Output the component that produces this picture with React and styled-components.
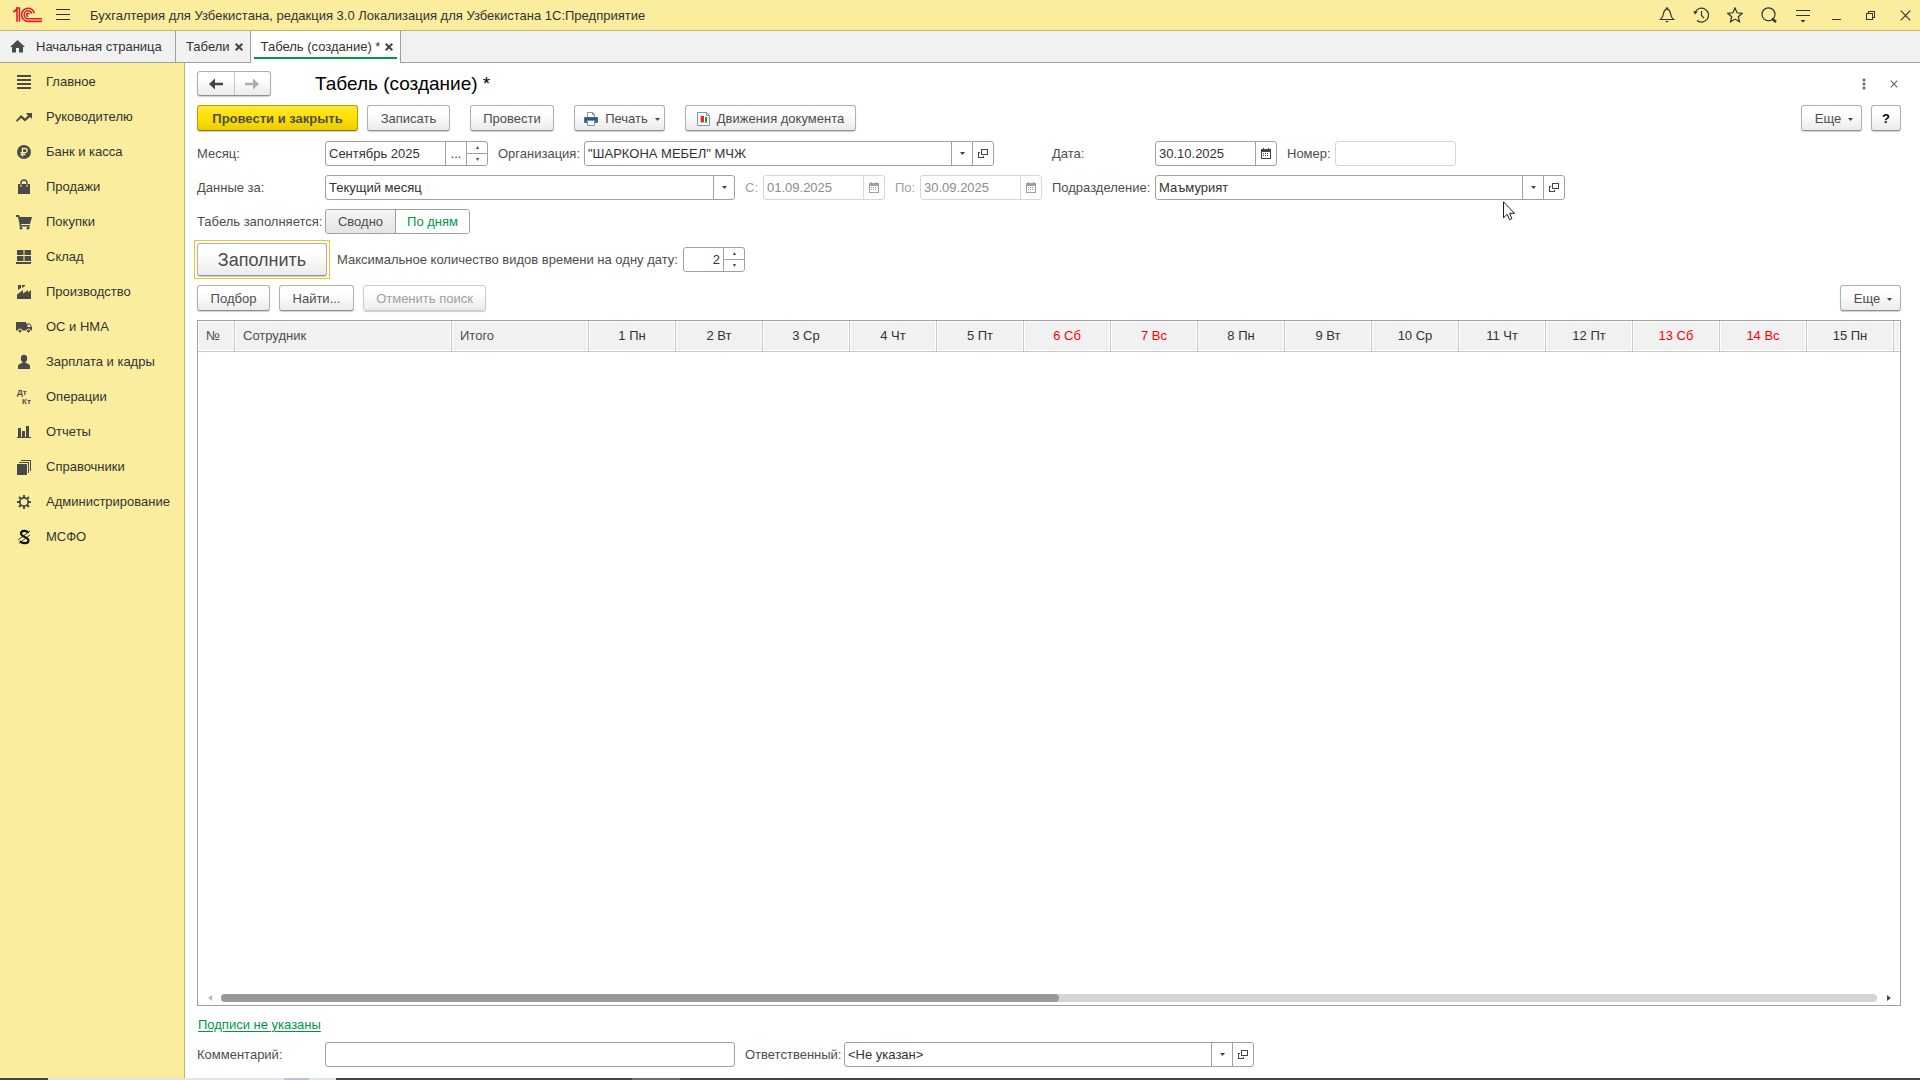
import React from "react";
import styled, { createGlobalStyle, css } from "styled-components";

const c = {
  yellow: "#fbed9e",
  yellowLine: "#c3b566",
  line: "#a0a0a0",
  lineSoft: "#d6d6d6",
  text: "#333333",
  label: "#4d4d4d",
  muted: "#a0a0a0",
  green: "#009646",
  head: "#f1f1f1",
};

const GlobalStyle = createGlobalStyle`
  * { box-sizing: border-box; }
  body { margin: 0; background: #ffffff; }
  body, button, input, select {
    font-family: "Liberation Sans", Arial, sans-serif;
    font-size: 13px;
    line-height: 16px;
    color: ${c.text};
  }
  button, input, select { margin: 0; padding: 0; border: 0; background: none; }
  svg { display: block; flex: none; }
`;

/* ---------- shell ---------- */
const Page = styled.div`
  display: flex;
  flex-direction: column;
  min-height: 100vh;
`;

const TitleBar = styled.header`
  display: flex;
  align-items: center;
  height: 31px;
  padding: 0 5px 0 13px;
  background: ${c.yellow};
  border-bottom: 1px solid ${c.yellowLine};
`;

const MenuButton = styled.button`
  display: flex;
  margin: 0 20px 0 13px;
`;

const AppTitle = styled.span`
  flex: 1;
  padding-top: 2px;
`;

const WindowTools = styled.div`
  display: flex;
  gap: 14px;
`;

const ToolButton = styled.button`
  display: flex;
  align-items: center;
  justify-content: center;
  width: ${(p) => p.$w || 20}px;
  height: 20px;
`;

const TabBar = styled.nav`
  display: flex;
  height: 32px;
  background: ${c.head};
  border-bottom: 1px solid ${c.line};
`;

const Tab = styled.div`
  display: flex;
  align-items: center;
  gap: 5px;
  padding: 0 7px 0 10px;
  border-right: 1px solid ${c.line};
  ${(p) =>
    p.$active &&
    css`
      margin-bottom: -1px;
      padding-bottom: 1px;
      background: linear-gradient(${c.green}, ${c.green}) center bottom 4px / calc(100% - 6px) 2px no-repeat #ffffff;
    `}
`;

const HomeTab = styled(Tab)`
  gap: 11px;
  width: 176px;
`;

const TabButton = styled.button`
  color: ${c.text};
`;

const Body = styled.div`
  display: flex;
  flex: 1;
`;

const Sidebar = styled.aside`
  flex: none;
  width: 185px;
  padding-top: 1px;
  background: ${c.yellow};
  border-right: 1px solid ${c.yellowLine};
`;

const MenuItem = styled.a`
  display: flex;
  align-items: center;
  gap: 14px;
  height: 35px;
  padding-left: 16px;
  color: ${c.text};
  text-decoration: none;
`;

const Main = styled.main`
  display: flex;
  flex: 1;
  flex-direction: column;
  gap: 9px;
  min-width: 0;
  padding: 8px 19px 11px 12px;
`;

/* ---------- buttons ---------- */
const Heading = styled.div`
  display: flex;
  align-items: center;
  height: 25px;
`;

const PageTitle = styled.h1`
  flex: 1;
  margin: 0 0 0 44px;
  font-size: 19px;
  font-weight: 400;
  line-height: 24px;
  color: #000000;
`;

const HeadingTools = styled.div`
  display: flex;
  gap: 15px;
`;

const raised = css`
  border: 1px solid #b0b0b0;
  border-bottom-color: #909090;
  border-radius: 3px;
  background: linear-gradient(#ffffff 30%, #ebebeb);
  box-shadow: 0 1px 1px rgba(0, 0, 0, 0.2);
`;

const History = styled.div`
  ${raised}
  display: flex;
  width: 74px;
  height: 25px;
`;

const HistoryButton = styled.button`
  display: flex;
  flex: 1;
  align-items: center;
  justify-content: center;
  & + & { border-left: 1px solid #c8c8c8; }
`;

const Bar = styled.div`
  display: flex;
  align-items: center;
  gap: 9px;
  padding-bottom: ${(p) => p.$space || 0}px;
`;

const Group = styled.div`
  display: flex;
  gap: 9px;
  margin-right: ${(p) => (p.$last ? 0 : 11)}px;
`;

const Spacer = styled.div`
  flex: 1;
`;

const Button = styled.button`
  ${raised}
  display: flex;
  align-items: center;
  justify-content: center;
  gap: 7px;
  width: ${(p) => p.$w}px;
  height: 26px;
  padding: 2px 0 0 ${(p) => (p.$menu ? 5 : 0)}px;
  color: ${c.label};
  &:disabled {
    color: ${c.muted};
    border-color: #cccccc;
  }
`;

const PrimaryButton = styled(Button)`
  font-weight: 700;
  border-color: #b89d00;
  border-bottom-color: #8f7a00;
  background: linear-gradient(#ffe838, #ffe000 50%, #eccd00);
`;

const HelpButton = styled(Button)`
  font-weight: 700;
  color: #000000;
`;

const FillButton = styled(Button)`
  position: relative;
  width: 130px;
  height: 33px;
  padding: 0;
  font-size: 18px;
  &::after {
    content: "";
    position: absolute;
    inset: -4px;
    border: 1px solid #f5c518;
  }
`;

/* ---------- form ---------- */
const Form = styled.div`
  display: flex;
  gap: 10px;
`;

const FormColumn = styled.div`
  display: flex;
  flex-direction: column;
  gap: 9px;
`;

const FormRow = styled.div`
  display: flex;
  align-items: center;
  gap: 10px;
`;

const FieldGroup = styled.div`
  display: flex;
  align-items: center;
`;

const Label = styled.label`
  width: ${(p) => p.$w}px;
  white-space: nowrap;
  color: ${(p) => (p.$muted ? c.muted : c.label)};
`;

const Box = styled.div`
  --edge: ${(p) => (p.$muted ? c.lineSoft : c.line)};
  display: flex;
  width: ${(p) => p.$w}px;
  height: 25px;
  border: 1px solid var(--edge);
  border-radius: 3px;
  background: #ffffff;
`;

const TextInput = styled.input`
  flex: 1;
  min-width: 0;
  padding: 0 3px;
  outline: 0;
  appearance: textfield;
  text-align: ${(p) => (p.$right ? "right" : "left")};
  &::-webkit-inner-spin-button { display: none; }
  &:disabled { color: #8c8c8c; }
`;

const SelectWrap = styled.span`
  display: grid;
  flex: 1;
  grid-template-columns: minmax(0, 1fr) 21px;
`;

const Select = styled.select`
  grid-area: 1 / 1 / 2 / 3;
  padding: 0 26px 0 3px;
  outline: 0;
  appearance: none;
`;

const Arrow = styled.span`
  display: flex;
  grid-area: 1 / 2;
  align-items: center;
  justify-content: center;
  border-left: 1px solid var(--edge);
  pointer-events: none;
`;

const SideButton = styled.button`
  display: flex;
  align-items: center;
  justify-content: center;
  width: 21px;
  border-left: 1px solid var(--edge);
`;

const Stepper = styled.span`
  display: grid;
  width: 21px;
  border-left: 1px solid var(--edge);
`;

const StepButton = styled.button`
  display: flex;
  align-items: center;
  justify-content: center;
  & + & { border-top: 1px solid var(--edge); }
`;

const Segments = styled.div`
  display: flex;
  height: 25px;
  border: 1px solid ${c.line};
  border-radius: 3px;
  overflow: hidden;
`;

const Segment = styled.label`
  display: flex;
  align-items: center;
  justify-content: center;
  width: ${(p) => p.$w}px;
  color: ${c.label};
  background: linear-gradient(#f6f6f6, #e4e4e4);
  & + & { border-left: 1px solid ${c.line}; }
  &:has(input:checked) {
    color: ${c.green};
    background: #ffffff;
  }
  input {
    position: absolute;
    opacity: 0;
    pointer-events: none;
  }
`;

/* ---------- table ---------- */
const Sheet = styled.section`
  display: flex;
  flex: 1;
  flex-direction: column;
  justify-content: space-between;
  border: 1px solid ${c.line};
  overflow: hidden;
`;

const SheetView = styled.div`
  overflow: hidden;
`;

const Table = styled.table`
  width: 100%;
  table-layout: fixed;
  border-collapse: separate;
  border-spacing: 0;
`;

const Th = styled.th`
  height: 31px;
  padding: 0 8px 1px;
  font-weight: 400;
  text-align: ${(p) => (p.$day ? "center" : "left")};
  white-space: nowrap;
  color: ${(p) => (p.$off ? "#ff0000" : p.$day ? c.text : c.label)};
  background: ${c.head};
  border-right: 1px solid #c8c8c8;
  border-bottom: 1px solid #c8c8c8;
  box-shadow: inset 0 0 0 1px #ffffff;
  &:last-child { border-right: 0; padding: 0; }
`;

const ScrollRow = styled.div`
  display: flex;
  align-items: center;
  gap: 8px;
  padding: 0 8px 3px;
`;

const ScrollArrow = styled.button`
  display: flex;
  width: 7px;
  height: 8px;
  align-items: center;
  justify-content: center;
`;

const Track = styled.div`
  display: flex;
  flex: 1;
  height: 8px;
  border-radius: 4px;
  background: #d5d5d5;
`;

const Thumb = styled.div`
  border-radius: 4px;
  background: #999999;
`;

const SignLink = styled.a`
  align-self: flex-start;
  padding: 2px 0 0 1px;
  color: ${c.green};
  text-decoration: underline;
  text-underline-offset: 2px;
`;

const DesktopEdge = styled.footer`
  display: flex;
  height: 2px;
  background: #454343;
`;

const EdgePart = styled.span`
  width: ${(p) => p.$w}px;
  background: ${(p) => p.$color};
`;

const Pointer = styled.div`
  position: absolute;
  left: 1503px;
  top: 201px;
  pointer-events: none;
`;

/* ---------- icons ---------- */
const Svg = ({ s = 16, w = s, h = s, children, ...rest }) => (
  <svg width={w} height={h} viewBox={`0 0 ${w} ${h}`} fill="none" aria-hidden="true" {...rest}>
    {children}
  </svg>
);

const Logo = () => (
  <Svg w={30} h={16} stroke="#da2128" strokeWidth="1.6">
    <path d="M0 4.4h1.8L4 1.2v13.6" />
    <path d="M3.2 1h3.2v13.8" />
    <path d="M21.2 6.2C20.4 3 18.2 1.2 15.2 1.2a6.6 6.6 0 0 0 0 13.2H29" />
    <path d="M18.6 6.6c-.4-1.8-1.6-2.8-3.4-2.8a4 4 0 0 0 0 8H29" />
    <path d="M16.2 7.2c-.2-.6-.4-.8-1-.8a1.5 1.5 0 0 0 0 3" />
  </Svg>
);

const Burger = () => (
  <Svg w={14} h={12} fill="#333" shapeRendering="crispEdges">
    <path d="M0 0h14v1H0zM0 5h14v1H0zM0 10h14v1H0z" />
  </Svg>
);

const Caret = ({ up, w = 5 }) => (
  <Svg w={w} h={3} fill="#444">
    <path d={up ? `M0 3h${w}L${w / 2} 0z` : `M0 0h${w}L${w / 2} 3z`} />
  </Svg>
);

const OpenIcon = () => (
  <Svg s={10} stroke="#444" shapeRendering="crispEdges">
    <path d="M3.5 .5h6v5h-6z M2 3.5H.5v5h5V7" />
  </Svg>
);

const CalendarIcon = ({ color = "#444" }) => (
  <Svg w={10} h={11} fill={color} shapeRendering="crispEdges">
    <path d="M0 1h2V0h1v1h4V0h1v1h2v10H0zM1 4v6h8V4z" fillRule="evenodd" />
    <path d="M2 5h1v1H2zM4 5h1v1H4zM6 5h1v1H6zM2 7h1v1H2zM4 7h1v1H4zM6 7h1v1H6z" />
  </Svg>
);

const CrossIcon = ({ s = 8, color = "#444", width = 2 }) => (
  <Svg s={s} stroke={color} strokeWidth={width}>
    <path d={`M.7 .7L${s - 0.7} ${s - 0.7}M${s - 0.7} .7L.7 ${s - 0.7}`} />
  </Svg>
);

const HomeIcon = () => (
  <Svg w={15} h={13} fill="#4a4a4a">
    <path d="M7.5 0L15 7h-2v5.500H9V8H6v4.500H2V7H0z" />
  </Svg>
);

const ArrowIcon = ({ flip, color }) => (
  <Svg w={14} h={12} fill={color}>
    <path d={flip ? "M14 6L8 .5V4.800H0v2.400h8v4.300z" : "M0 6L6 .5V4.800h8v2.400H6v4.300z"} />
  </Svg>
);

const PrinterIcon = () => (
  <Svg w={14} h={14}>
    <path d="M3.500 5V.5h5l2 2V5" fill="#fff" stroke="#7d93a8" />
    <path d="M8.500 .5v2h2" stroke="#7d93a8" />
    <rect x="0" y="5" width="14" height="6" rx="1" fill="#3f6a96" />
    <path d="M1 7h12" stroke="#24476b" />
    <path d="M3.500 8.500h7v5h-7z" fill="#fff" stroke="#7d93a8" />
  </Svg>
);

const ReportIcon = () => (
  <Svg w={13} h={14}>
    <path d="M.5 .5h9l3 3v10H.5z" fill="#fff" stroke="#8096aa" />
    <path d="M9.500 .5v3h3" stroke="#8096aa" />
    <path d="M3.500 3v7.500H11" stroke="#b4c0cb" />
    <path d="M4 4h3v6H4z" fill="#f3251c" />
    <path d="M8 5h2v5H8z" fill="#159a2c" />
  </Svg>
);

const windowIcons = [
  ["Уведомления", <Svg key="i" stroke="#333" strokeWidth="1.200"><path d="M1.500 12.500h13c-2-1.500-2.500-3-3-6C11 3.800 10.200 2.600 8.700 2.300V1H7.300v1.300C5.800 2.600 5 3.800 4.500 6.500c-.5 3-1 4.500-3 6z" /><path d="M6 14h4l-2 1.600z" fill="#333" stroke="none" /></Svg>],
  ["История", <Svg key="i" stroke="#333" strokeWidth="1.200"><path d="M2 5.500A7 7 0 1 1 4 13.500" /><path d="M8.500 4v4.500l2.500 2.700" /><path d="M0 4.500h4.800L2.200 7.500z" fill="#333" stroke="none" /></Svg>],
  ["Избранное", <Svg key="i" stroke="#333" strokeWidth="1.200"><path d="M8 1l2.100 4.800 5.200.5-4 3.400 1.200 5.100L8 12.100l-4.500 2.700 1.200-5.100-4-3.400 5.200-.5z" /></Svg>],
  ["Поиск", <Svg key="i" stroke="#333" strokeWidth="1.200"><circle cx="7.500" cy="7.300" r="6.500" /><path d="M11 11.500l4 3.500" strokeWidth="2.400" /></Svg>],
  ["Настройки", <Svg key="i" fill="#333"><path d="M1 3h14v1H1zM1 8h14v1H1zM5.500 13h5L8 15.500z" /></Svg>],
  ["Свернуть", <Svg key="i" fill="#333" shapeRendering="crispEdges"><path d="M3 12h9v1H3z" /></Svg>],
  ["Восстановить", <Svg key="i" stroke="#333" shapeRendering="crispEdges"><path d="M3.500 6.500h6v6h-6zM5.500 6V4.500h6v6H10" /></Svg>],
  ["Закрыть", <CrossIcon key="i" s={11} color="#333" width={1.2} />],
];

const I = (children) => <Svg fill="#4a4a4a">{children}</Svg>;

const menu = [
  ["Главное", I(<path d="M1 1h14v2H1zM1 5h14v2H1zM1 9h14v2H1zM1 13h14v2H1z" />)],
  ["Руководителю", I(<path d="M0 11.500l5-5.500 4 3.500 3-3L10 4h6v6l-2-2-5 4.500-4-3.500L1 13z" />)],
  ["Банк и касса", I(<><circle cx="8" cy="8" r="7" /><path d="M6.500 12.500V4.500h2.500a2.100 2.100 0 0 1 0 4.200H4.500M4.500 10.500h5" stroke={c.yellow} strokeWidth="1.300" fill="none" /></>)],
  ["Продажи", I(<><path d="M2 5h12v10H2z" /><path d="M5 8V4a3 3 0 0 1 6 0v4" stroke="#4a4a4a" strokeWidth="1.400" fill="none" /><path d="M5 8V5.500M11 8V5.500" stroke={c.yellow} /></>)],
  ["Покупки", I(<><path d="M0 1h3l1 2h12l-2 7H5v1h9v1.500H3.500V10L2 3H0z" /><circle cx="5" cy="14" r="1.500" /><circle cx="12" cy="14" r="1.500" /></>)],
  ["Склад", I(<path d="M1 1h6.500v5H1zM8.500 1H15v5H8.500zM1 7h6.500v5H1zM8.500 7H15v5H8.500zM0 13h15v2H0z" />)],
  ["Производство", I(<path d="M1 15v-4.500L7 6v3.500L12 6v2.500L15 6v9zM2 1h3v3L2 6zM6 1h3v1L6 4z" />)],
  ["ОС и НМА", I(<><path d="M0 3h10v8.500H0zM10 4.500h4l2 3.500v3.500h-6z" /><path d="M11.500 5.500h2L15 8h-3.500z" fill={c.yellow} /><circle cx="4" cy="12" r="2" stroke={c.yellow} /><circle cx="12.500" cy="12" r="2" stroke={c.yellow} /></>)],
  ["Зарплата и кадры", I(<><ellipse cx="8" cy="4.500" rx="3.200" ry="3.800" /><path d="M6.500 7h3v3h-3z" /><path d="M2 15v-3c0-1.500 2-2.500 4-3h4c2 .5 4 1.500 4 3v3z" /></>)],
  ["Операции", <Svg key="i" fill="#4a4a4a" fontSize="8" fontWeight="700" fontFamily="Liberation Sans, Arial, sans-serif"><text x="1" y="6">Дт</text><text x="6" y="15">Кт</text></Svg>],
  ["Отчеты", I(<path d="M2 4h3v9H2zM6 7h3v6H6zM10 2h3v11h-3zM1 13h14v1H1z" />)],
  ["Справочники", I(<path d="M1 5h10v11H1zM3 3h10v11h-1V4H3zM5 1h10v11h-1V2H5z" />)],
  ["Администрирование", I(<><circle cx="8" cy="8" r="4.200" fill="none" stroke="#4a4a4a" strokeWidth="1.800" /><path d="M8 1v3M8 12v3M1 8h3M12 8h3M3 3l2.200 2.200M10.800 10.800L13 13M13 3l-2.200 2.200M5.200 10.800L3 13" stroke="#4a4a4a" strokeWidth="2" /></>)],
  ["МСФО", <Svg key="i" stroke="#111"><path d="M12 4C11 1 5 1 5 4.500S12.500 8 12.500 11.500 6 15 4 12" strokeWidth="2.200" /><path d="M14 2L2 11M14 6L3 14.500" strokeWidth=".8" /></Svg>],
];

/* ---------- field parts ---------- */
const Combo = ({ id, w, value, open }) => (
  <Box $w={w}>
    <SelectWrap>
      <Select id={id} defaultValue={value}>
        <option>{value}</option>
      </Select>
      <Arrow><Caret /></Arrow>
    </SelectWrap>
    {open && <SideButton type="button" aria-label="Открыть"><OpenIcon /></SideButton>}
  </Box>
);

const DateBox = ({ id, value, disabled }) => (
  <Box $w={122} $muted={disabled}>
    <TextInput id={id} defaultValue={value} disabled={disabled} />
    <SideButton type="button" aria-label="Календарь" disabled={disabled}>
      <CalendarIcon color={disabled ? "#a0a0a0" : "#444"} />
    </SideButton>
  </Box>
);

const Steps = () => (
  <Stepper>
    <StepButton type="button" aria-label="Больше"><Caret up w={3} /></StepButton>
    <StepButton type="button" aria-label="Меньше"><Caret w={3} /></StepButton>
  </Stepper>
);

const ScrollBar = ({ total, visible }) => (
  <ScrollRow>
    <ScrollArrow aria-label="Влево"><Svg w={4} h={6} fill="#b8b8b8"><path d="M4 0v6L0 3z" /></Svg></ScrollArrow>
    <Track><Thumb style={{ width: `${(visible / total) * 100}%` }} /></Track>
    <ScrollArrow aria-label="Вправо"><Svg w={4} h={6} fill="#444"><path d="M0 0v6l4-3z" /></Svg></ScrollArrow>
  </ScrollRow>
);

const weekdays = ["Пн", "Вт", "Ср", "Чт", "Пт", "Сб", "Вс"];
const days = Array.from({ length: 15 }, (_, i) => ({
  title: `${i + 1} ${weekdays[i % 7]}`,
  off: i % 7 > 4,
}));

export default function App() {
  return (
    <>
      <GlobalStyle />
      <Page>
        <TitleBar>
          <Logo />
          <MenuButton aria-label="Меню"><Burger /></MenuButton>
          <AppTitle>Бухгалтерия для Узбекистана, редакция 3.0 Локализация для Узбекистана 1С:Предприятие</AppTitle>
          <WindowTools>
            {windowIcons.map(([name, icon]) => (
              <ToolButton key={name} aria-label={name}>{icon}</ToolButton>
            ))}
          </WindowTools>
        </TitleBar>

        <TabBar>
          <HomeTab><HomeIcon /><TabButton>Начальная страница</TabButton></HomeTab>
          <Tab>
            <TabButton>Табели</TabButton>
            <TabButton aria-label="Закрыть вкладку"><CrossIcon /></TabButton>
          </Tab>
          <Tab $active>
            <TabButton>Табель (создание) *</TabButton>
            <TabButton aria-label="Закрыть вкладку"><CrossIcon /></TabButton>
          </Tab>
        </TabBar>

        <Body>
          <Sidebar>
            {menu.map(([name, icon]) => (
              <MenuItem key={name} href="#">{icon}{name}</MenuItem>
            ))}
          </Sidebar>

          <Main>
            <Heading>
              <History>
                <HistoryButton aria-label="Назад"><ArrowIcon color="#444" /></HistoryButton>
                <HistoryButton aria-label="Вперед"><ArrowIcon flip color="#adadad" /></HistoryButton>
              </History>
              <PageTitle>Табель (создание) *</PageTitle>
              <HeadingTools>
                <ToolButton $w={15} aria-label="Действия">
                  <Svg w={4} h={12} fill="#666"><circle cx="2" cy="2" r="1.500" /><circle cx="2" cy="6" r="1.500" /><circle cx="2" cy="10" r="1.500" /></Svg>
                </ToolButton>
                <ToolButton $w={15} aria-label="Закрыть"><CrossIcon color="#666" width={1.2} /></ToolButton>
              </HeadingTools>
            </Heading>

            <Bar $space={1}>
              <Group>
                <PrimaryButton $w={161}>Провести и закрыть</PrimaryButton>
                <Button $w={83}>Записать</Button>
              </Group>
              <Group><Button $w={84}>Провести</Button></Group>
              <Group><Button $w={91} $menu><PrinterIcon />Печать<Caret /></Button></Group>
              <Group $last><Button $w={171}><ReportIcon />Движения документа</Button></Group>
              <Spacer />
              <Button $w={61} $menu>Еще<Caret /></Button>
              <HelpButton $w={30}>?</HelpButton>
            </Bar>

            <Form>
              <FormColumn>
                <FormRow>
                  <FieldGroup>
                    <Label $w={128} htmlFor="month">Месяц:</Label>
                    <Box $w={163}>
                      <TextInput id="month" defaultValue="Сентябрь 2025" />
                      <SideButton type="button" aria-label="Выбрать">...</SideButton>
                      <Steps />
                    </Box>
                  </FieldGroup>
                  <FieldGroup>
                    <Label $w={86} htmlFor="org">Организация:</Label>
                    <Combo id="org" w={410} value={'"ШАРКОНА МЕБЕЛ" МЧЖ'} open />
                  </FieldGroup>
                </FormRow>
                <FormRow>
                  <FieldGroup>
                    <Label $w={128} htmlFor="range">Данные за:</Label>
                    <Combo id="range" w={410} value="Текущий месяц" />
                  </FieldGroup>
                  <FieldGroup>
                    <Label $w={18} $muted htmlFor="from">С:</Label>
                    <DateBox id="from" value="01.09.2025" disabled />
                  </FieldGroup>
                  <FieldGroup>
                    <Label $w={25} $muted htmlFor="to">По:</Label>
                    <DateBox id="to" value="30.09.2025" disabled />
                  </FieldGroup>
                </FormRow>
                <FieldGroup>
                  <Label as="span" $w={128}>Табель заполняется:</Label>
                  <Segments role="radiogroup" aria-label="Табель заполняется">
                    <Segment $w={69}><input type="radio" name="mode" />Сводно</Segment>
                    <Segment $w={74}><input type="radio" name="mode" defaultChecked />По дням</Segment>
                  </Segments>
                </FieldGroup>
              </FormColumn>
              <FormColumn>
                <FormRow>
                  <FieldGroup>
                    <Label $w={103} htmlFor="date">Дата:</Label>
                    <DateBox id="date" value="30.10.2025" />
                  </FieldGroup>
                  <FieldGroup>
                    <Label $w={48} htmlFor="number">Номер:</Label>
                    <Box $w={121} $muted><TextInput id="number" /></Box>
                  </FieldGroup>
                </FormRow>
                <FieldGroup>
                  <Label $w={103} htmlFor="dept">Подразделение:</Label>
                  <Combo id="dept" w={410} value="Маъмурият" open />
                </FieldGroup>
              </FormColumn>
            </Form>

            <FormRow>
              <FillButton>Заполнить</FillButton>
              <FieldGroup>
                <Label $w={346} htmlFor="max">Максимальное количество видов времени на одну дату:</Label>
                <Box $w={62}>
                  <TextInput id="max" type="number" defaultValue="2" $right />
                  <Steps />
                </Box>
              </FieldGroup>
            </FormRow>

            <Bar>
              <Button $w={73}>Подбор</Button>
              <Button $w={75}>Найти...</Button>
              <Button $w={123} disabled>Отменить поиск</Button>
              <Spacer />
              <Button $w={61} $menu>Еще<Caret /></Button>
            </Bar>

            <Sheet>
              <SheetView>
                <Table>
                  <colgroup>
                    <col width="37" />
                    <col width="217" />
                    <col width="137" />
                    {days.map((d) => <col key={d.title} width="87" />)}
                    <col />
                  </colgroup>
                  <thead>
                    <tr>
                      <Th>№</Th>
                      <Th>Сотрудник</Th>
                      <Th>Итого</Th>
                      {days.map((d) => <Th key={d.title} $day $off={d.off}>{d.title}</Th>)}
                      <Th />
                    </tr>
                  </thead>
                </Table>
              </SheetView>
              <ScrollBar total={3360} visible={1700} />
            </Sheet>

            <SignLink href="#">Подписи не указаны</SignLink>

            <FormRow>
              <FieldGroup>
                <Label $w={128} htmlFor="comment">Комментарий:</Label>
                <Box $w={410}><TextInput id="comment" /></Box>
              </FieldGroup>
              <FieldGroup>
                <Label $w={99} htmlFor="owner">Ответственный:</Label>
                <Combo id="owner" w={410} value="<Не указан>" open />
              </FieldGroup>
            </FormRow>
          </Main>
        </Body>

        <DesktopEdge>
          <EdgePart $w={48} $color="#454343" />
          <EdgePart $w={236} $color="#e4e4e4" />
          <EdgePart $w={25} $color="#b9c4d8" />
          <EdgePart $w={27} $color="#e4e4e4" />
          <EdgePart $w={296} $color="#454343" />
          <EdgePart $w={48} $color="#6e6c6c" />
        </DesktopEdge>
      </Page>
      <Pointer>
        <Svg w={12} h={20} fill="#fff" stroke="#1c1c2a">
          <path d="M.5 .8v16l3.700-3.500 2.300 5.400 2.400-1L6.600 12.300h4.900z" />
        </Svg>
      </Pointer>
    </>
  );
}
